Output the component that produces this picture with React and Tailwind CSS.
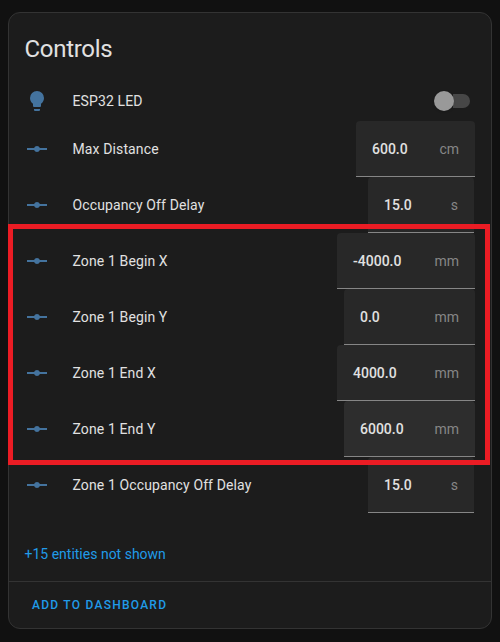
const rows = [
  { label: 'Max Distance', value: '600.0', unit: 'cm', field: 'w-[119px] mr-4' },
  { label: 'Occupancy Off Delay', value: '15.0', unit: 's', field: 'w-[106px] mr-[17px]' },
  { label: 'Zone 1 Begin X', value: '-4000.0', unit: 'mm', field: 'w-[138px] mr-4' },
  { label: 'Zone 1 Begin Y', value: '0.0', unit: 'mm', field: 'w-[131px] mr-4' },
  { label: 'Zone 1 End X', value: '4000.0', unit: 'mm', field: 'w-[138px] mr-4' },
  { label: 'Zone 1 End Y', value: '6000.0', unit: 'mm', field: 'w-[131px] mr-4', active: true },
  { label: 'Zone 1 Occupancy Off Delay', value: '15.0', unit: 's', field: 'w-[106px] mr-[17px]' },
];

function Icon({ d }) {
  return (
    <svg viewBox="0 0 24 24" className="size-6 shrink-0 fill-[#44739e]">
      <path d={d} />
    </svg>
  );
}

const BULB =
  'M12,2A7,7 0 0,0 5,9C5,11.38 6.19,13.47 8,14.74V17A1,1 0 0,0 9,18H15A1,1 0 0,0 16,17V14.74C17.81,13.47 19,11.38 19,9A7,7 0 0,0 12,2M9,21A1,1 0 0,0 10,22H14A1,1 0 0,0 15,21V20H9V21Z';
const VERTEX =
  'M2,11H9.17C9.58,9.83 10.69,9 12,9C13.31,9 14.42,9.83 14.83,11H22V13H14.83C14.42,14.17 13.31,15 12,15C10.69,15 9.58,14.17 9.17,13H2V11Z';

function NumberRow({ label, value, unit, field, active }) {
  return (
    <div className="flex h-14 items-center pl-4">
      <Icon d={VERTEX} />
      <span className="ml-[23.5px] flex-1 tracking-[0.12px]">{label}</span>
      <div
        className={`flex h-14 items-center justify-between rounded-t border-b border-[#868686] px-4 ${field} ${active ? 'bg-[#2d2d2d]' : 'bg-[#282828]'}`}
      >
        <span className="font-medium">{value}</span>
        <span className="text-[#868686]">{unit}</span>
      </div>
    </div>
  );
}

export default function App() {
  return (
    <div className="relative h-[642px] w-[500px] overflow-hidden bg-[#111111] px-2 pt-3 font-['Roboto',sans-serif] text-sm text-[#e1e1e1]">
      <div className="flex h-[617px] w-[484px] flex-col rounded-xl border border-[#333333] bg-[#1c1c1c]">
        <h1 className="h-[68px] pl-[15.5px] pt-3 text-2xl leading-[48px] tracking-[-0.288px]">Controls</h1>
        <div className="flex h-10 items-center pl-4">
          <Icon d={BULB} />
          <span className="ml-[23.5px] flex-1 tracking-[0.12px]">ESP32 LED</span>
          <div className="mr-[21px] flex h-5 w-9 items-center">
            <div className="size-5 shrink-0 rounded-full bg-[#999999] shadow" />
            <div className="-ml-4 h-3.5 w-8 rounded-full bg-[#999999]/35 [clip-path:inset(0_0_0_15px)]" />
          </div>
        </div>
        {rows.map((row) => (
          <NumberRow key={row.label} {...row} />
        ))}
        <div className="flex h-[68px] items-end pb-[17px] pl-[15.5px] leading-5 text-[#209be8]">+15 entities not shown</div>
        <div className="flex flex-1 items-center border-t border-[#333333] pl-[23px] text-xs font-medium tracking-[1.25px] text-[#209be8]">
          ADD TO DASHBOARD
        </div>
      </div>
      <div className="absolute left-2 top-[224px] h-[241px] w-[482px] border-5 border-[#eb1c24]" />
    </div>
  );
}
